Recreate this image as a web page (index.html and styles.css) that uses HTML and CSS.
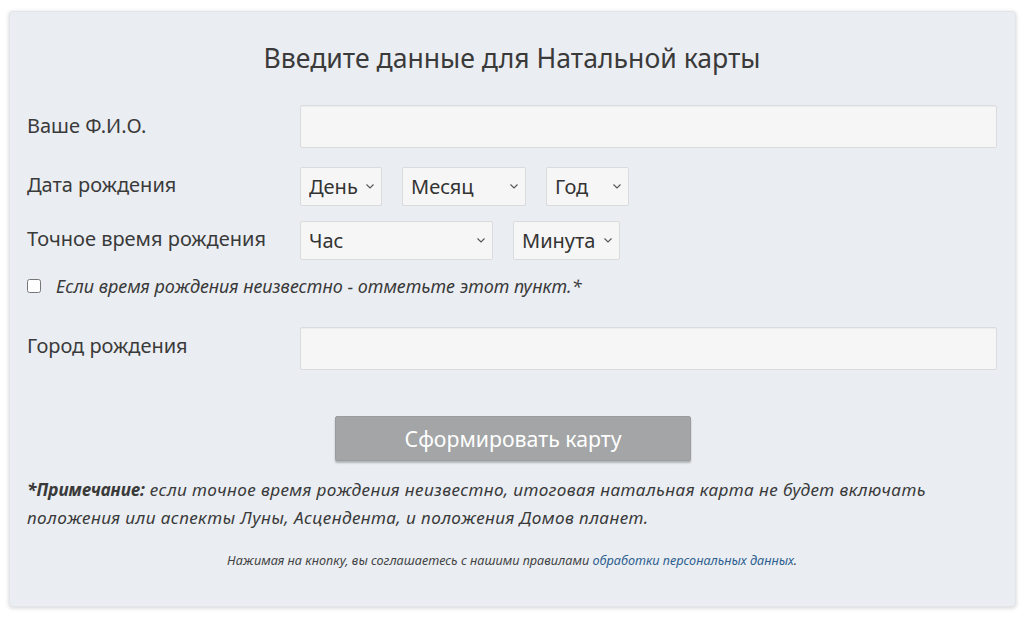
FILE: index.html
```html
<!DOCTYPE html>
<html lang="ru">
<head>
<meta charset="utf-8">
<title>Натальная карта</title>
<link rel="stylesheet" href="styles.css">
</head>
<body>
<form class="card">
  <h2 class="title">Введите данные для Натальной карты</h2>

  <div class="row row-name">
    <label class="label">Ваше Ф.И.О.</label>
    <input class="field" type="text">
  </div>

  <div class="row row-date">
    <label class="label">Дата рождения</label>
    <div class="selects">
      <div class="sel w-day"><select><option>День</option></select><svg class="chev" viewBox="0 0 8 5"><path d="M0.5 0.5 L4 4 L7.5 0.5" /></svg></div>
      <div class="sel w-month"><select><option>Месяц</option></select><svg class="chev" viewBox="0 0 8 5"><path d="M0.5 0.5 L4 4 L7.5 0.5" /></svg></div>
      <div class="sel w-year"><select><option>Год</option></select><svg class="chev" viewBox="0 0 8 5"><path d="M0.5 0.5 L4 4 L7.5 0.5" /></svg></div>
    </div>
  </div>

  <div class="row row-time">
    <label class="label">Точное время рождения</label>
    <div class="selects">
      <div class="sel w-hour"><select><option>Час</option></select><svg class="chev" viewBox="0 0 8 5"><path d="M0.5 0.5 L4 4 L7.5 0.5" /></svg></div>
      <div class="sel w-min"><select><option>Минута</option></select><svg class="chev" viewBox="0 0 8 5"><path d="M0.5 0.5 L4 4 L7.5 0.5" /></svg></div>
    </div>
  </div>

  <label class="check">
    <input type="checkbox">
    <span>Если время рождения неизвестно - отметьте этот пункт.*</span>
  </label>

  <div class="row row-city">
    <label class="label">Город рождения</label>
    <input class="field" type="text">
  </div>

  <div class="btn-wrap">
    <button type="button" class="btn">Сформировать карту</button>
  </div>

  <p class="note"><b>*Примечание:</b> если точное время рождения неизвестно, итоговая натальная карта не будет включать положения или аспекты Луны, Асцендента, и положения Домов планет.</p>

  <p class="agree">Нажимая на кнопку, вы соглашаетесь с нашими правилами <a href="#">обработки персональных данных</a>.</p>
</form>
</body>
</html>
```

FILE: styles.css
```css
* { box-sizing: border-box; }

html, body {
  margin: 0;
  padding: 0;
  background: #ffffff;
}

body {
  padding: 11px 8px 10px 9px;
  font-family: "Noto Sans", "Open Sans", sans-serif;
  color: #333333;
}

.card {
  display: block;
  width: 1007px;
  height: 596px;
  background: #eaeef3;
  border: 1px solid #e2e5e9;
  border-radius: 4px;
  box-shadow: 0 1px 4px rgba(0, 0, 0, 0.18);
  padding: 26px 18px 0 17px;
}

.title {
  margin: 0 0 27px 0;
  text-align: center;
  font-weight: 400;
  font-size: 26.6px;
  line-height: 40px;
  color: #3a3a3a;
}

.row {
  display: flex;
  align-items: flex-start;
}

.label {
  width: 273px;
  flex: none;
  font-size: 20px;
  color: #3a3a3a;
}

.row-name .label { padding-top: 8px; line-height: 26px; }
.row-city .label { padding-top: 6px; line-height: 26px; }
.row-date .label, .row-time .label { padding-top: 5px; line-height: 26px; }

.field {
  flex: 1;
  height: 43px;
  background: #f6f6f6;
  border: 1px solid #d9dbdd;
  border-radius: 2px;
  box-shadow: inset 0 1px 1px rgba(0, 0, 0, 0.04);
  outline: none;
}

.row-date { margin-top: 19px; }
.row-time { margin-top: 15px; }

.selects {
  display: flex;
  gap: 20px;
}

.sel {
  position: relative;
  height: 39px;
}

.sel select {
  appearance: none;
  -webkit-appearance: none;
  width: 100%;
  height: 100%;
  background: #f6f6f6;
  border: 1px solid #d9dbdd;
  border-radius: 2px;
  font-family: "Noto Sans", "Open Sans", sans-serif;
  font-size: 20px;
  color: #333333;
  padding: 0 0 0 8px;
  outline: none;
}

.chev {
  position: absolute;
  right: 8px;
  top: 17px;
  width: 8px;
  height: 5px;
  fill: none;
  stroke: #555555;
  stroke-width: 1.1;
}

.w-day { width: 82px; }
.w-month { width: 124px; }
.w-year { width: 83px; }
.w-hour { width: 193px; }
.w-min { width: 107px; }

.check {
  display: flex;
  align-items: center;
  margin-top: 15px;
  font-style: italic;
  font-size: 18px;
  color: #3a3a3a;
  line-height: 22px;
}

.check input {
  margin: 0 15px 0 0;
  width: 14px;
  height: 14px;
}

.row-city { margin-top: 30px; }

.btn-wrap {
  padding-left: 308px;
  margin-top: 46px;
}

.btn {
  width: 356px;
  height: 45px;
  background: #a3a5a6;
  border: 1px solid #9a9c9d;
  border-radius: 2px;
  box-shadow: 0 2px 2px rgba(0, 0, 0, 0.25);
  color: #ffffff;
  font-family: "Noto Sans", "Open Sans", sans-serif;
  font-size: 21.3px;
  padding: 0;
}

.note {
  margin: 15px 0 0 0;
  font-style: italic;
  font-size: 17.2px;
  line-height: 28px;
  letter-spacing: 0.4px;
  color: #3a3a3a;
}

.note b {
  font-weight: 700;
  letter-spacing: 0;
}

.agree {
  margin: 19px 0 0 0;
  text-align: center;
  font-style: italic;
  font-size: 12.7px;
  color: #444444;
}

.agree a {
  color: #2e5f8f;
  text-decoration: none;
}
```
